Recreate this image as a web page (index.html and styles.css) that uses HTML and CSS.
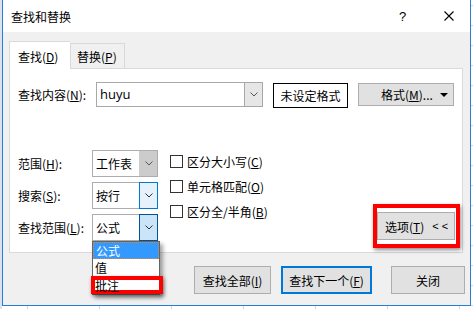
FILE: index.html
```html
<!DOCTYPE html>
<html lang="zh-CN">
<head>
    <meta charset="UTF-8">
    <title>查找和替换</title>
    <link rel="stylesheet" href="styles.css">
</head>
<body>
    <div class="dialog">
        <div class="titlebar">
            <span class="title">查找和替换</span>
            <span class="help">?</span>
            <svg class="close" width="10" height="10" viewBox="0 0 10 10">
                <path d="M0.5 0.5 L9.5 9.5 M9.5 0.5 L0.5 9.5" stroke="#000" stroke-width="1.1" fill="none"/>
            </svg>
        </div>

        <div class="dialog-body">
            <div class="tabs">
                <div class="tab active">查找(<u>D</u>)</div>
                <div class="tab">替换(<u>P</u>)</div>
            </div>

            <div class="panel">
                <div class="find-row">
                    <span class="lbl lbl-find">查找内容(<u>N</u>):</span>
                    <div class="combo combo-find">
                        <span class="combo-text latin">huyu</span>
                        <span class="drop">
                            <svg width="8" height="5" viewBox="0 0 8 5"><polyline points="0.5,0.5 4,4 7.5,0.5" fill="none" stroke="#555" stroke-width="1"/></svg>
                        </span>
                    </div>
                    <div class="format-preview">未设定格式</div>
                    <div class="btn btn-format">格式(<u>M</u>)... <span class="tri"></span></div>
                </div>

                <div class="options">
                    <div class="fields">
                        <span class="lbl">范围(<u>H</u>):</span>
                        <div class="combo select">
                            <span class="combo-text">工作表</span>
                            <span class="drop drop-gray">
                                <svg width="8" height="5" viewBox="0 0 8 5"><polyline points="0.5,0.5 4,4 7.5,0.5" fill="none" stroke="#555" stroke-width="1"/></svg>
                            </span>
                        </div>

                        <span class="lbl">搜索(<u>S</u>):</span>
                        <div class="combo select">
                            <span class="combo-text">按行</span>
                            <span class="drop drop-hover">
                                <svg width="8" height="5" viewBox="0 0 8 5"><polyline points="0.5,0.5 4,4 7.5,0.5" fill="none" stroke="#333" stroke-width="1"/></svg>
                            </span>
                        </div>

                        <span class="lbl">查找范围(<u>L</u>):</span>
                        <div class="combo select open">
                            <span class="combo-text">公式</span>
                            <span class="drop drop-pressed">
                                <svg width="8" height="5" viewBox="0 0 8 5"><polyline points="0.5,0.5 4,4 7.5,0.5" fill="none" stroke="#333" stroke-width="1"/></svg>
                            </span>
                            <div class="droplist">
                                <div class="item selected">公式</div>
                                <div class="item">值</div>
                                <div class="item item-last">批注</div>
                                <div class="mark mark-item"></div>
                            </div>
                        </div>
                    </div>

                    <div class="checks">
                        <div class="check"><span class="box"></span>区分大小写(<u>C</u>)</div>
                        <div class="check"><span class="box"></span>单元格匹配(<u>O</u>)</div>
                        <div class="check"><span class="box"></span>区分全/半角(<u>B</u>)</div>
                    </div>

                    <div class="opt-wrap">
                        <div class="btn btn-options">选项(<u>T</u>) <span class="arrows">&lt; &lt;</span></div>
                        <div class="mark mark-options"></div>
                    </div>
                </div>
            </div>

            <div class="actions">
                <div class="btn btn-all">查找全部(<u>I</u>)</div>
                <div class="btn btn-next">查找下一个(<u>F</u>)</div>
                <div class="btn btn-close">关闭</div>
            </div>
        </div>
    </div>
</body>
</html>
```

FILE: styles.css
```css
html, body {
    margin: 0;
    height: 100%;
}
body {
    font-family: "Noto Sans CJK SC", "Noto Sans", sans-serif;
    font-size: 12px;
    color: #000;
    background-color: #fff;
    background-image:
        linear-gradient(to right, #dbe3ee 0, #dbe3ee 2px, transparent 2px),
        linear-gradient(to right, #d4d4d4 1px, transparent 1px),
        linear-gradient(to bottom, #d4d4d4 1px, transparent 1px);
    background-size: 100% 100%, 72px 100%, 100% 20px;
    background-position: 0 0, 27px 0, 0 5px;
    background-repeat: no-repeat, repeat-x, repeat-y;
    overflow: hidden;
}
u {
    text-decoration: underline;
    text-underline-offset: 1px;
}
.latin {
    font-family: "Open Sans", "Noto Sans", sans-serif;
    font-size: 13px;
}

/* window */
.dialog {
    margin-left: 2px;
    width: 469px;
    height: 306px;
    box-sizing: border-box;
    border: 1px solid #2b7bd8;
    border-top: none;
    background: #f0f0f0;
    display: flex;
    flex-direction: column;
}
.titlebar {
    height: 32px;
    background: #fff;
    display: flex;
    align-items: center;
    padding-left: 8px;
}
.title {
    flex: 1;
    font-size: 12px;
}
.help {
    width: 8px;
    font-size: 13px;
    font-family: "Liberation Sans", sans-serif;
    margin-right: 37px;
}
.close {
    margin-right: 16px;
}
.dialog-body {
    flex: 1;
    padding: 0 7px 0 6px;
}

/* tabs */
.tabs {
    margin-top: 9px;
    height: 27px;
    display: flex;
    align-items: flex-end;
}
.tab {
    box-sizing: border-box;
    height: 25px;
    padding: 0 6px;
    border: 1px solid #d9d9d9;
    border-bottom: none;
    background: #f0f0f0;
    display: flex;
    align-items: center;
}
.tab.active {
    position: relative;
    z-index: 1;
    height: 29px;
    margin-bottom: -2px;
    padding: 0 8px;
    width: 61px;
    background: #fff;
    border-right: none;
}
.tab.active + .tab {
    width: 55px;
}

/* panel */
.panel {
    position: relative;
    box-sizing: border-box;
    width: 454px;
    height: 185px;
    border: 1px solid #d9d9d9;
    background: #fff;
    padding: 12px 7px 0 8px;
}
.find-row {
    height: 26px;
    display: flex;
    align-items: center;
}
.lbl {
    display: flex;
    align-items: center;
}
.lbl-find {
    width: 78px;
}
.combo {
    box-sizing: border-box;
    border: 1px solid #abadb3;
    background: #fff;
    display: flex;
    align-items: stretch;
}
.combo-text {
    flex: 1;
    display: flex;
    align-items: center;
    padding-left: 3px;
}
.combo-find {
    width: 167px;
    height: 25px;
    border-color: #a8a8a8;
}
.drop {
    width: 17px;
    display: flex;
    align-items: center;
    justify-content: center;
    background: #e6e6e6;
    border-left: 1px solid #a8a8a8;
}
.drop-gray {
    background: #cccccc;
    border-left-color: #cccccc;
}
.drop-hover {
    background: #e5f1fb;
    border: 1px solid #0078d7;
    margin: -1px -1px -1px 0;
}
.drop-pressed {
    background: #cce4f7;
    border: 1px solid #005499;
    margin: -1px -1px -1px 0;
}
.format-preview {
    box-sizing: border-box;
    width: 75px;
    height: 25px;
    margin-left: 10px;
    margin-top: 2px;
    border: 1px solid #000;
    display: flex;
    align-items: center;
    justify-content: center;
}

/* buttons */
.btn {
    box-sizing: border-box;
    background: #e1e1e1;
    border: 1px solid #adadad;
    display: flex;
    align-items: center;
    justify-content: center;
}
.btn-format {
    width: 96px;
    height: 23px;
    margin-left: 10px;
    margin-top: 1px;
    position: relative;
    justify-content: flex-start;
    padding-left: 22px;
}
.tri {
    position: absolute;
    right: 5px;
    top: 9px;
    border-left: 4px solid transparent;
    border-right: 4px solid transparent;
    border-top: 4px solid #000;
}

/* options area */
.options {
    margin-top: 43px;
    display: flex;
    align-items: flex-start;
}
.fields {
    display: grid;
    grid-template-columns: 74px 66px;
    grid-auto-rows: 27px;
    row-gap: 5px;
}
.select {
    height: 27px;
}
.select.open {
    position: relative;
}
.droplist {
    position: absolute;
    left: -1px;
    top: 26px;
    width: 68px;
    box-sizing: border-box;
    border: 1px solid #646464;
    background: #fff;
    box-shadow: 3px 3px 4px rgba(0, 0, 0, 0.35);
    z-index: 2;
}
.item {
    position: relative;
    z-index: 1;
    height: 17px;
    line-height: 17px;
    padding-left: 2px;
}
.item.selected {
    height: 15px;
    line-height: 15px;
    background: #3399ff;
    color: #fff;
    border: 1px dotted #e08a30;
}
.item-last {
    height: 18px;
    line-height: 20px;
}
.checks {
    margin-left: 12px;
    margin-top: -1px;
}
.check {
    height: 25px;
    display: flex;
    align-items: center;
}
.box {
    width: 13px;
    height: 13px;
    box-sizing: border-box;
    border: 1px solid #333;
    background: #fff;
    margin-right: 4px;
}
.opt-wrap {
    margin-left: auto;
    align-self: flex-end;
    margin-bottom: 1px;
    position: relative;
}
.btn-options {
    width: 78px;
    height: 28px;
    justify-content: flex-start;
    padding-left: 7px;
}
.arrows {
    margin-left: 8px;
    font-size: 11px;
    font-family: "Liberation Sans", sans-serif;
}

/* red annotation boxes */
.mark {
    position: absolute;
    border: 4px solid #ff0000;
    box-shadow: 1px 2px 4px rgba(0, 0, 0, 0.45);
    pointer-events: none;
}
.mark-options {
    left: -4px;
    right: -5px;
    top: -8px;
    bottom: -8px;
}
.mark-item {
    left: -2px;
    top: 34px;
    width: 72px;
    height: 18px;
    box-sizing: border-box;
}

/* bottom row */
.actions {
    margin-top: 13px;
    margin-right: -2px;
    display: flex;
    justify-content: flex-end;
}
.actions .btn {
    height: 28px;
}
.btn-all {
    width: 77px;
}
.btn-next {
    width: 91px;
    margin-left: 10px;
    border: 2px solid #0078d7;
}
.btn-close {
    width: 74px;
    margin-left: 19px;
}
```
